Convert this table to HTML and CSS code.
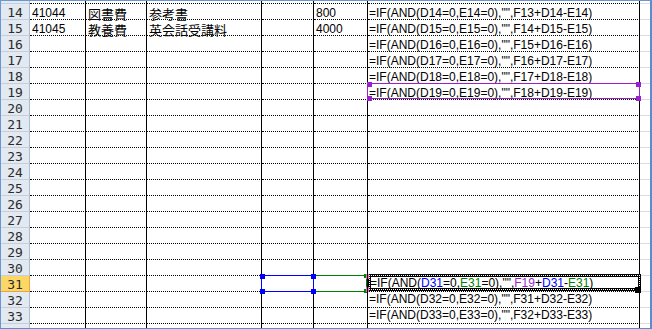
FILE: index.html
```html
<!DOCTYPE html>
<html>
<head>
<meta charset="utf-8">
<link rel="stylesheet" href="styles.css">
</head>
<body>
<div class="sheet">
  <div class="row top"><div class="h"></div><div class="c"></div><div class="c"></div><div class="c"></div><div class="c"></div><div class="c"></div><div class="c"></div><div class="g"></div></div>

  <div class="row lo"><div class="h">14</div><div class="c pa">41044</div><div class="c pb"><span class="jp">図書費</span></div><div class="c pa"><span class="jp">参考書</span></div><div class="c"></div><div class="c pa">800</div><div class="c pf">=IF(AND(D14=0,E14=0),"",F13+D14-E14)</div><div class="g"></div></div>
  <div class="row lo"><div class="h">15</div><div class="c pa">41045</div><div class="c pb"><span class="jp">教養費</span></div><div class="c pa"><span class="jp">英会話受講料</span></div><div class="c"></div><div class="c pa">4000</div><div class="c pf">=IF(AND(D15=0,E15=0),"",F14+D15-E15)</div><div class="g"></div></div>
  <div class="row lo"><div class="h">16</div><div class="c"></div><div class="c"></div><div class="c"></div><div class="c"></div><div class="c"></div><div class="c pf">=IF(AND(D16=0,E16=0),"",F15+D16-E16)</div><div class="g"></div></div>
  <div class="row lo"><div class="h">17</div><div class="c"></div><div class="c"></div><div class="c"></div><div class="c"></div><div class="c"></div><div class="c pf">=IF(AND(D17=0,E17=0),"",F16+D17-E17)</div><div class="g"></div></div>
  <div class="row lo"><div class="h">18</div><div class="c"></div><div class="c"></div><div class="c"></div><div class="c"></div><div class="c"></div><div class="c pf">=IF(AND(D18=0,E18=0),"",F17+D18-E18)</div><div class="g"></div></div>
  <div class="row lo"><div class="h">19</div><div class="c"></div><div class="c"></div><div class="c"></div><div class="c"></div><div class="c"></div><div class="c pf">=IF(AND(D19=0,E19=0),"",F18+D19-E19)</div><div class="g"></div></div>
  <div class="row"><div class="h">20</div><div class="c"></div><div class="c"></div><div class="c"></div><div class="c"></div><div class="c"></div><div class="c"></div><div class="g"></div></div>
  <div class="row"><div class="h">21</div><div class="c"></div><div class="c"></div><div class="c"></div><div class="c"></div><div class="c"></div><div class="c"></div><div class="g"></div></div>
  <div class="row"><div class="h">22</div><div class="c"></div><div class="c"></div><div class="c"></div><div class="c"></div><div class="c"></div><div class="c"></div><div class="g"></div></div>
  <div class="row"><div class="h">23</div><div class="c"></div><div class="c"></div><div class="c"></div><div class="c"></div><div class="c"></div><div class="c"></div><div class="g"></div></div>
  <div class="row"><div class="h">24</div><div class="c"></div><div class="c"></div><div class="c"></div><div class="c"></div><div class="c"></div><div class="c"></div><div class="g"></div></div>
  <div class="row"><div class="h">25</div><div class="c"></div><div class="c"></div><div class="c"></div><div class="c"></div><div class="c"></div><div class="c"></div><div class="g"></div></div>
  <div class="row"><div class="h">26</div><div class="c"></div><div class="c"></div><div class="c"></div><div class="c"></div><div class="c"></div><div class="c"></div><div class="g"></div></div>
  <div class="row"><div class="h">27</div><div class="c"></div><div class="c"></div><div class="c"></div><div class="c"></div><div class="c"></div><div class="c"></div><div class="g"></div></div>
  <div class="row"><div class="h">28</div><div class="c"></div><div class="c"></div><div class="c"></div><div class="c"></div><div class="c"></div><div class="c"></div><div class="g"></div></div>
  <div class="row"><div class="h">29</div><div class="c"></div><div class="c"></div><div class="c"></div><div class="c"></div><div class="c"></div><div class="c"></div><div class="g"></div></div>
  <div class="row"><div class="h">30</div><div class="c"></div><div class="c"></div><div class="c"></div><div class="c"></div><div class="c"></div><div class="c"></div><div class="g"></div></div>
  <div class="row"><div class="h active">31</div><div class="c"></div><div class="c"></div><div class="c"></div><div class="c"></div><div class="c"></div><div class="c pf2">=IF(AND(<span class="rd">D31</span>=0,<span class="re">E31</span>=0),"",<span class="rf">F19</span>+<span class="rd">D31</span>-<span class="re">E31</span>)</div><div class="g"></div></div>
  <div class="row"><div class="h">32</div><div class="c"></div><div class="c"></div><div class="c"></div><div class="c"></div><div class="c"></div><div class="c pf">=IF(AND(D32=0,E32=0),"",F31+D32-E32)</div><div class="g"></div></div>
  <div class="row"><div class="h">33</div><div class="c"></div><div class="c"></div><div class="c"></div><div class="c"></div><div class="c"></div><div class="c pf">=IF(AND(D33=0,E33=0),"",F32+D33-E33)</div><div class="g"></div></div>
  <div class="row last"><div class="h">34</div><div class="c"></div><div class="c"></div><div class="c"></div><div class="c"></div><div class="c"></div><div class="c pf">=IF(AND(D34=0,E34=0),"",F33+D34-E34)</div><div class="g"></div></div>

  <!-- range highlight F19 -->
  <div class="rng-f"></div>
  <div class="hp" style="left:366px;top:81px"></div>
  <div class="hp" style="left:366px;top:95px"></div>
  <div class="hp" style="left:635px;top:81px"></div>
  <div class="hp" style="left:635px;top:95px"></div>

  <!-- range highlight E31 -->
  <div class="rng-e"></div>
  <div class="hg" style="left:363px;top:273px"></div>
  <div class="hg" style="left:363px;top:288px"></div>

  <!-- range highlight D31 -->
  <div class="rng-d"></div>
  <div class="hb" style="left:259px;top:273px"></div>
  <div class="hb" style="left:310px;top:273px"></div>
  <div class="hb" style="left:259px;top:288px"></div>
  <div class="hb" style="left:310px;top:288px"></div>

  <!-- edit cell -->
  <div class="edit"></div>
  <div class="hk" style="left:365px;top:273px"></div>
  <div class="hk" style="left:365px;top:286px"></div>
  <div class="fill"></div>
</div>
</body>
</html>
```
FILE: styles.css
```css
html, body {
  margin: 0;
  padding: 0;
  background: #ffffff;
}

.sheet {
  position: relative;
  box-sizing: border-box;
  width: 652px;
  height: 329px;
  overflow: hidden;
  border-top: 1px solid #6a96d2;
  border-left: 1px solid #6a96d2;
  border-right: 2px solid #5b8bd0;
  border-bottom: 1px solid #5b8bd0;
  font-family: "Liberation Sans", "Noto Sans CJK JP", sans-serif;
  font-size: 12px;
  color: #000;
}

.row {
  display: grid;
  grid-template-columns: 29px 56px 61px 115px 52px 54px 272px 10px;
  height: 16px;
}

.row.top {
  height: 3px;
}

.row > div {
  box-sizing: border-box;
  height: 100%;
  display: flex;
  align-items: flex-end;
  white-space: nowrap;
  line-height: 13px;
  padding-bottom: 1px;
}

.row.lo > .c {
  line-height: 11px;
  padding-bottom: 0;
}

.row.last > .c {
  line-height: 9px;
  padding-bottom: 0;
}

.h {
  background: #e3e9f1;
  border-bottom: 1px solid #c3cfdd;
  border-right: 1px solid #a9bcd3;
  justify-content: center;
  font-family: "DejaVu Sans Mono", monospace;
  font-size: 13px;
  color: #2b2b2b;
  line-height: 11px !important;
  padding-bottom: 1px;
}

.h.active {
  background: #fdd765;
  border-bottom: 1px solid #f0a23c;
  border-right: 1px solid #f0a23c;
}

.c {
  border-bottom: 1px dotted #000;
  border-right: 1px solid #000;
}

.g {
  border-bottom: 1px solid #dadcdd;
}

.pa { padding-left: 2px; }
.pb { padding-left: 2px; }
.pf { padding-left: 1px; }
.pf2 { padding-left: 2px; }

.jp {
  font-size: 13px;
  line-height: 11px;
  font-family: "Noto Sans CJK JP", sans-serif;
  vertical-align: 1px;
}

.rd { color: #0000ff; }
.re { color: #008000; }
.rf { color: #9a1fcf; }

.rng-f {
  position: absolute;
  left: 366px;
  top: 82px;
  width: 273px;
  height: 16px;
  box-sizing: border-box;
  border: 1px solid #9a1fcf;
}

.hp {
  position: absolute;
  width: 5px;
  height: 5px;
  background: #9a1fcf;
}

.rng-d {
  position: absolute;
  left: 260px;
  top: 274px;
  width: 53px;
  height: 17px;
  box-sizing: border-box;
  border: 1px solid #0000ff;
}

.hb {
  position: absolute;
  width: 5px;
  height: 5px;
  background: #0000ff;
}

.rng-e {
  position: absolute;
  left: 312px;
  top: 274px;
  width: 54px;
  height: 17px;
  box-sizing: border-box;
  border: 1px solid #008000;
}

.hg {
  position: absolute;
  width: 3px;
  height: 4px;
  background: #008000;
}

.hk {
  position: absolute;
  width: 1px;
  height: 5px;
  background: #000;
  border-left: 1px solid #ff5fd0;
  border-right: 1px solid #ff5fd0;
}

.edit {
  position: absolute;
  left: 367px;
  top: 273px;
  width: 273px;
  height: 17px;
  box-sizing: border-box;
  border: 3px solid #000;
}

.edit::after {
  content: "";
  position: absolute;
  left: -2px;
  top: -2px;
  right: -2px;
  bottom: -2px;
  border: 1px dotted #fff;
}

.fill {
  position: absolute;
  left: 634px;
  top: 286px;
  width: 6px;
  height: 6px;
  background: #000;
}
```
